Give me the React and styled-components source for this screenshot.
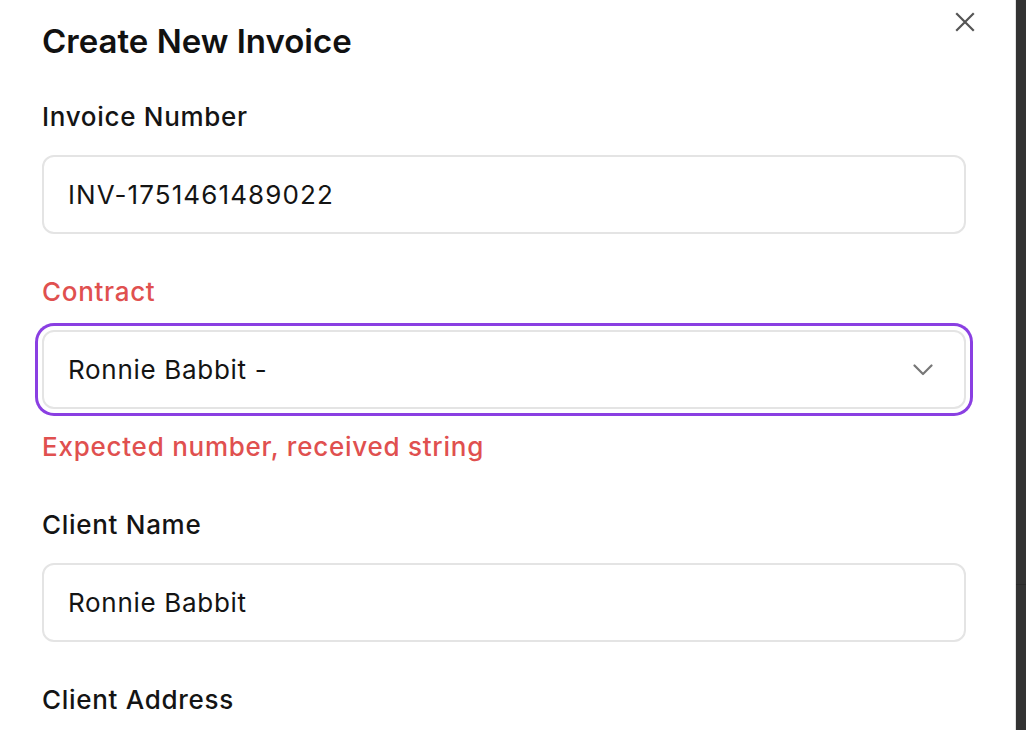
import React from "react";
import styled, { createGlobalStyle } from "styled-components";

const Global = createGlobalStyle`
  html, body { margin: 0; padding: 0; height: 100%; }
  body { font-family: Inter, "Noto Sans", sans-serif; background: #fff; overflow: hidden; }
  #root { height: 100%; }
`;

const Page = styled.div`
  display: flex;
  height: 730px;
  width: 1026px;
`;

const Panel = styled.div`
  position: relative;
  flex: 1;
  background: #fff;
  border-right: 1px solid #e2e2e2;
  padding: 21px 49px 0 42px;
  display: flex;
  flex-direction: column;
  overflow: hidden;
`;

const Backdrop = styled.div`
  width: 10px;
  background: #333333;
  display: flex;
  flex-direction: column;
`;

const BackdropTop = styled.div`
  height: 584px;
  border-bottom: 1px solid #2a2a2a;
`;

const Title = styled.h2`
  margin: 0;
  font-size: 33px;
  line-height: 40px;
  font-weight: 600;
  color: #111;
  letter-spacing: 0;
`;

const CloseButton = styled.button`
  position: absolute;
  top: 11px;
  right: 39px;
  width: 22px;
  height: 22px;
  padding: 0;
  border: none;
  background: none;
  display: flex;
  align-items: center;
  justify-content: center;
  color: #555;
  cursor: pointer;
`;

const Form = styled.form`
  display: flex;
  flex-direction: column;
  gap: 42px;
  margin-top: 40px;
`;

const Field = styled.div`
  display: flex;
  flex-direction: column;
`;

const Label = styled.label`
  font-size: 26px;
  line-height: 32px;
  font-weight: 500;
  letter-spacing: 0.7px;
  color: ${(p) => (p.$error ? "#e0504f" : "#141414")};
  margin-bottom: 22px;
`;

const InputBox = styled.div`
  box-sizing: border-box;
  height: 79px;
  flex-shrink: 0;
  border: 2px solid #e4e4e4;
  border-radius: 12px;
  padding: 0 31px 0 24px;
  display: flex;
  align-items: center;
  justify-content: space-between;
  font-size: 26px;
  letter-spacing: ${(p) => (p.$wide ? "1.1px" : "0.7px")};
  color: #141414;
  background: #fff;
  box-shadow: ${(p) =>
    p.$focused ? "0 0 0 4px #fff, 0 0 0 7px #8a3fe2" : "none"};
`;

const ErrorText = styled.p`
  margin: 22px 0 4px;
  font-size: 26px;
  line-height: 32px;
  font-weight: 500;
  letter-spacing: 0.75px;
  color: #e0504f;
`;

const Chevron = () => (
  <svg width="20" height="12" viewBox="0 0 20 12" fill="none" stroke="#777" strokeWidth="2.2" strokeLinecap="round" strokeLinejoin="round">
    <path d="M1.5 1.5l8.5 8.5 8.5-8.5" />
  </svg>
);

export default function App() {
  return (
    <>
      <Global />
      <Page>
        <Panel>
          <Title>Create New Invoice</Title>
          <CloseButton aria-label="Close">
            <svg width="20" height="20" viewBox="0 0 20 20" stroke="currentColor" strokeWidth="2.2" strokeLinecap="square">
              <path d="M2 2l16 16M18 2L2 18" />
            </svg>
          </CloseButton>
          <Form>
            <Field>
              <Label>Invoice Number</Label>
              <InputBox $wide>INV-1751461489022</InputBox>
            </Field>
            <Field>
              <Label $error>Contract</Label>
              <InputBox $focused>
                <span>Ronnie Babbit -</span>
                <Chevron />
              </InputBox>
              <ErrorText>Expected number, received string</ErrorText>
            </Field>
            <Field>
              <Label>Client Name</Label>
              <InputBox>Ronnie Babbit</InputBox>
            </Field>
            <Field>
              <Label>Client Address</Label>
            </Field>
          </Form>
        </Panel>
        <Backdrop>
          <BackdropTop />
        </Backdrop>
      </Page>
    </>
  );
}
